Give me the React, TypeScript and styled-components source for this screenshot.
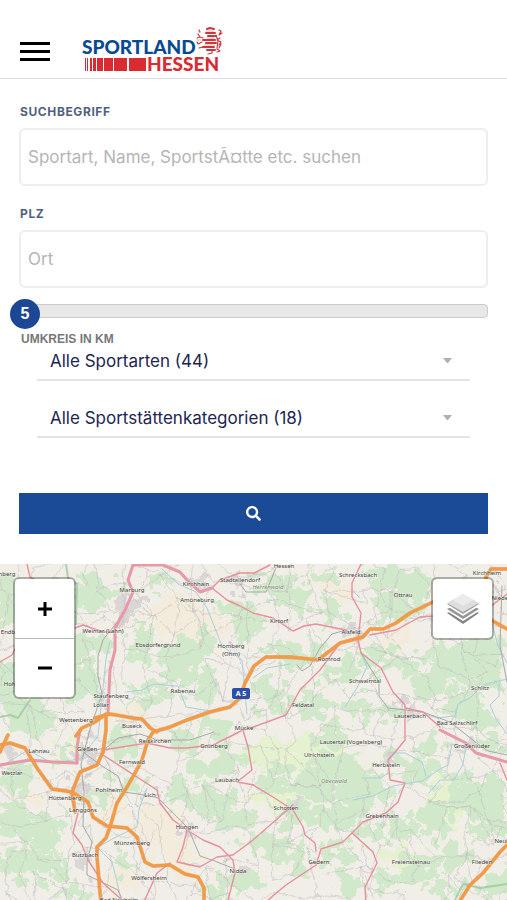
import React, { useState } from "react";
import styled, { createGlobalStyle } from "styled-components";
import { FaSearch } from "react-icons/fa";

const GlobalStyle = createGlobalStyle`
  *, *::before, *::after { box-sizing: border-box; }
  body { margin: 0; background: #fff; font-family: Inter, "Liberation Sans", sans-serif; }
`;

const Page = styled.div`
  display: flex;
  flex-direction: column;
  min-height: 100vh;
`;

const Header = styled.header`
  display: flex;
  align-items: flex-start;
  gap: 32px;
  height: 79px;
  padding: 27px 20px 0;
  border-bottom: 1px solid #ddd;
`;

const MenuButton = styled.button`
  display: flex;
  flex-direction: column;
  gap: 5px;
  width: 30px;
  margin-top: 15px;
  padding: 0;
  border: 0;
  background: none;
  cursor: pointer;
`;

const MenuBar = styled.span`
  height: 3px;
  background: #000;
`;

const LogoLink = styled.a`
  display: block;
  line-height: 0;
`;

const SearchForm = styled.form`
  display: flex;
  flex-direction: column;
  padding: 25px 19px 30px;
`;

const Field = styled.div`
  display: flex;
  flex-direction: column;
  gap: 8px;
  & + & { margin-top: 20px; }
`;

const FieldLabel = styled.label`
  padding-left: 1px;
  font-size: 12px;
  font-weight: 700;
  line-height: 16px;
  letter-spacing: 0.05em;
  color: #525f7f;
`;

const TextInput = styled.input`
  width: 100%;
  height: 58px;
  padding: 0 7px;
  border: 2px solid #eee;
  border-radius: 6px;
  font: 400 17px/24px Inter, sans-serif;
  color: #172b4d;
  &::placeholder { color: #b5b5b5; opacity: 1; }
`;

const RangeWrap = styled.div`
  position: relative;
  display: flex;
  margin-top: 16px;
`;

const RangeInput = styled.input`
  appearance: none;
  width: 100%;
  height: 14px;
  margin: 0;
  border: 1px solid #ccc;
  border-radius: 4px;
  background: #e8e8e8;
  cursor: pointer;
  &::-webkit-slider-thumb { appearance: none; width: 12px; height: 12px; background: transparent; }
`;

const RangeBadge = styled.output`
  position: absolute;
  top: -5px;
  margin-left: -9px;
  width: 30px;
  height: 30px;
  border-radius: 50%;
  background: #1b4794;
  color: #fff;
  font: 700 16px/30px "Liberation Sans", sans-serif;
  text-align: center;
  pointer-events: none;
`;

const RangeLabel = styled.label`
  margin: 13px 2px 0;
  font: 700 12px/16px "Liberation Sans", sans-serif;
  color: #777;
`;

const SelectList = styled.div`
  display: flex;
  flex-direction: column;
  gap: 23px;
  padding: 0 18px;
`;

const SelectRow = styled.div`
  display: grid;
  align-items: center;
  height: 34px;
  padding-bottom: 4px;
  border-bottom: 2px solid #e4e4e4;
  & > * { grid-area: 1 / 1; }
`;

const Select = styled.select`
  appearance: none;
  width: 100%;
  height: 28px;
  padding: 0 40px 0 13px;
  border: 0;
  background: transparent;
  font: 400 17px/24px Inter, sans-serif;
  color: #1d2550;
`;

const Caret = styled.svg`
  justify-self: end;
  margin-right: 17px;
  pointer-events: none;
`;

const SubmitButton = styled.button`
  display: flex;
  align-items: center;
  justify-content: center;
  height: 41px;
  margin-top: 55px;
  border: 1px solid #174a9c;
  background: #1b4a96;
  color: #fff;
  font-size: 15px;
  cursor: pointer;
`;

const MapFrame = styled.section`
  position: relative;
  flex: 1;
  min-height: 336px;
  overflow: hidden;
  background: #f1efe5;
`;

const MapDrawing = styled.svg`
  position: absolute;
  inset: 0;
  width: 100%;
  height: 100%;
`;

const MapControls = styled.div`
  position: relative;
  display: flex;
  justify-content: space-between;
  align-items: flex-start;
  padding: 13px 13px 0;
`;

const ControlBox = styled.div`
  display: flex;
  flex-direction: column;
  width: 63px;
  border: 2px solid rgba(0, 0, 0, 0.28);
  border-radius: 6px;
  background: #fff;
  background-clip: padding-box;
`;

const ControlButton = styled.button`
  display: flex;
  align-items: center;
  justify-content: center;
  height: 59px;
  padding: 0;
  border: 0;
  background: none;
  cursor: pointer;
  & + & { border-top: 1px solid #bbb; }
`;

const forests = [
  [12, 40, 20, 26], [8, 120, 18, 30], [92, 28, 26, 18], [88, 82, 20, 14], [30, 152, 24, 18], [80, 118, 22, 22], [158, 16, 12, 13],
  [140, 78, 12, 20], [180, 96, 20, 24], [200, 80, 16, 12], [140, 136, 14, 9], [160, 122, 18, 7], [206, 124, 16, 14], [232, 44, 16, 8], [247, 60, 13, 17],
  [272, 22, 22, 15], [298, 34, 14, 16], [330, 48, 14, 11], [322, 12, 18, 9], [392, 42, 20, 16], [388, 12, 22, 9], [416, 22, 16, 20], [450, 92, 22, 16],
  [276, 86, 15, 10], [300, 90, 24, 12], [372, 94, 14, 14], [402, 96, 18, 12], [430, 118, 22, 17], [470, 102, 22, 20], [494, 96, 12, 30], [340, 108, 18, 10],
  [272, 132, 16, 18], [312, 142, 22, 12], [352, 142, 16, 12], [330, 172, 20, 10], [384, 148, 16, 12], [464, 138, 20, 14], [480, 155, 22, 8],
  [186, 176, 14, 12], [214, 164, 18, 12], [232, 194, 18, 10], [204, 204, 18, 12], [180, 228, 17, 14], [214, 240, 20, 15], [238, 258, 16, 12],
  [120, 178, 12, 16], [126, 220, 14, 8], [98, 234, 12, 10], [58, 196, 10, 8], [20, 216, 20, 16], [12, 256, 17, 18], [42, 268, 20, 22], [20, 298, 22, 14],
  [52, 304, 15, 16], [72, 330, 15, 8], [122, 300, 8, 12], [242, 316, 20, 10], [212, 328, 14, 8],
  [336, 212, 36, 22], [368, 228, 24, 16], [306, 222, 22, 13], [276, 222, 22, 9], [272, 206, 16, 8], [300, 250, 20, 12], [330, 256, 24, 9], [352, 246, 16, 10],
  [270, 282, 17, 15], [298, 292, 14, 16], [336, 292, 18, 10], [368, 268, 14, 12], [346, 318, 12, 14], [398, 196, 16, 8], [422, 206, 22, 11], [428, 184, 16, 9],
  [470, 232, 23, 24], [496, 240, 16, 25], [434, 256, 16, 20], [402, 264, 14, 14], [420, 306, 22, 14], [456, 292, 16, 12], [490, 268, 18, 10], [388, 318, 14, 10], [446, 326, 16, 8], [498, 320, 14, 14], [490, 182, 12, 10], [454, 212, 12, 7]
];

const meadows = [[270, 190, 30, 14], [308, 196, 18, 20], [336, 180, 18, 14], [274, 236, 24, 8], [398, 290, 14, 12], [350, 200, 24, 8], [446, 240, 14, 30], [70, 180, 10, 8]];
const fields = [[178, 52, 30, 20], [160, 260, 24, 22], [178, 290, 18, 22], [114, 246, 12, 12], [126, 42, 12, 20], [210, 60, 20, 12], [130, 150, 24, 8], [340, 26, 12, 10], [396, 78, 14, 8], [28, 228, 12, 10], [118, 320, 16, 12]];
const towns = [[128, 44, 10, 15], [84, 184, 9, 10], [80, 222, 8, 12], [8, 192, 10, 8], [200, 20, 7, 7], [234, 20, 8, 6], [350, 68, 10, 8], [410, 147, 9, 6], [108, 68, 5, 5], [104, 138, 6, 8], [88, 296, 7, 9], [186, 264, 6, 6], [293, 240, 7, 5], [468, 180, 8, 6], [235, 306, 6, 6], [494, 32, 6, 8], [150, 228, 6, 5], [390, 200, 5, 5]];

const motorways = [
  "M101 340L97 293V283L106 274L110 263L117 239L127 223L135 209L142 196L148 176L153 168L170 163L187 156L210 148L230 143L240 134L245 119L254 102L266 93L290 93L318 96L340 79L363 73L370 65H383L396 59L410 49L433 38L460 28L486 20",
  "M0 181L10 179L25 184L37 204L52 225L72 228L88 238L93 253L107 262L127 264L137 273L145 298L153 302L170 301L185 310L198 313L204 324V340",
  "M75 248L72 228L80 208L97 201L103 188L106 166V150L95 158L82 164L76 172",
  "M95 154L110 150L133 154L142 155L150 164L157 168",
  "M0 188L8 171",
  "M507 281L500 288L483 309L470 321L458 340",
  "M507 5H491L486 13L488 50L491 56L507 65"
];

const primaryRoads = [
  "M143 0L133 1L128 16L133 28L125 46L115 64V86L110 106L108 149",
  "M133 1H163L180 8L187 16L200 28L212 24",
  "M77 199V183L80 166", "M0 201L30 196L53 198L77 199",
  "M440 166L466 179L476 189L507 198"
];

const secondaryRoads = [
  "M212 24L220 16L240 9H254L270 1",
  "M212 24L227 36L240 42L253 49L273 54L293 67L304 62L316 60L346 66",
  "M361 0L352 19V33L361 49L358 76L361 89L381 104L393 128L405 141L405 166L405 176L396 187L388 196L390 216L405 219L398 238L386 249L363 258L352 269L343 278L321 285L316 301L286 321L268 336",
  "M352 269L373 288L377 299L365 323L366 340",
  "M103 191L137 213L157 226L160 239L173 256L187 266L203 276L220 283L233 296L235 309L227 340",
  "M253 221L273 233L293 246L303 263L305 271L315 279L316 287M293 241L276 256L253 276L233 291L217 293L200 303L177 298L183 283L187 266",
  "M103 186L147 179L170 184L187 184L213 181L243 166L253 163L286 151L300 126L320 106L340 79",
  "M243 166L248 183L252 206L237 218L254 221",
  "M406 144L423 148L440 163M500 199L507 216",
  "M370 71L396 66L420 53L433 52L470 48",
  "M78 249L73 269L82 281L88 296L103 319L122 336",
  "M143 340L157 309L170 299", "M0 98L12 91L22 72", "M27 0L30 13L42 20", "M75 64L83 61L103 68L116 68", "M507 30L491 42"
];

const railways = [
  "M133 26L125 48L103 76L98 92V112L102 130L90 165L81 200L84 228L83 262L92 278L87 298V311L118 326L124 340",
  "M346 66L332 70L320 84L310 102L302 107L297 101", "M361 89L379 118V132L388 144L423 148L450 158L478 180L488 187L507 191",
  "M240 20L246 28H266L276 4", "M83 188L102 202L118 212L124 228L138 230L158 234L168 244L188 264L200 292L212 296L235 305", "M502 22L500 82L507 118",
  "M84 188L106 184L118 174L140 170L158 176L190 176L214 168"
];

const rivers = [
  "M162 5L178 20L196 28L207 44L222 82L242 96L247 150", "M0 203L28 186L52 199L80 195L98 172L106 95L110 78",
  "M126 128L142 126L153 120L178 122L186 143L210 147", "M253 114L267 104L290 100", "M361 89L367 103L358 122L345 143",
  "M507 99L498 82L490 52V26", "M498 117L483 121L470 134L458 140L455 152L450 158M423 150L438 154L453 152", "M507 115L499 117V132L490 141L496 155L507 170",
  "M353 236L373 232L393 222L422 217L440 205L448 201L452 180L466 183L463 200L454 216L440 216L428 230M390 189L405 189L422 198L426 212", "M362 214L380 214L390 208",
  "M100 282L114 274L137 263L139 245L147 224", "M98 284L112 298L117 318L122 340", "M276 254L293 240M352 26L360 34M0 97L16 112"
];

const places: [string, number, number, boolean?][] = [
  ["nberg", 7, 12], ["Hessen", 284, 4], ["Marburg", 132, 28], ["Kirchhain", 196, 22], ["Stadtallendorf", 240, 18], ["Amöneburg", 197, 38],
  ["Weimar (Lahn)", 103, 69], ["Endbach", 13, 70], ["Ebsdorfergrund", 158, 83], ["Homberg", 231, 84], ["(Ohm)", 231, 92], ["Staufenberg", 111, 134], ["Lollar", 101, 143],
  ["Rabenau", 183, 129], ["Wettenberg", 76, 158], ["Buseck", 132, 164], ["Mücke", 244, 166], ["Schrecksbach", 358, 13], ["Herrenwald", 268, 25, true], ["Ottrau", 403, 33],
  ["Kirtorf", 279, 59], ["Alsfeld", 351, 70], ["Romrod", 329, 97], ["Schwalmtal", 365, 119], ["Feldatal", 303, 143], ["Lauterbach", 410, 154], ["Bad Salzschlirf", 457, 161], ["Schlitz", 480, 126],
  ["Kirchheim", 487, 11], ["Niederaula", 507, 36], ["Lahnau", 39, 189], ["Gießen", 87, 187], ["Reiskirchen", 155, 179], ["Grünberg", 214, 184], ["Fernwald", 132, 200], ["Wetzlar", 12, 211],
  ["Pohlheim", 109, 228], ["Lich", 150, 233], ["Laubach", 227, 218], ["Hüttenberg", 65, 236], ["Langgöns", 83, 248], ["Hungen", 187, 265], ["Münzenberg", 132, 281], ["Butzbach", 85, 293],
  ["Nidda", 238, 309], ["Wölfersheim", 149, 316], ["Bad Nauheim", 119, 338], ["Lautertal (Vogelsberg)", 351, 180], ["Ulrichstein", 319, 193], ["Herbstein", 386, 203], ["Großenlüder", 472, 184],
  ["Oberwald", 334, 219, true], ["Schotten", 286, 246], ["Grebenhain", 382, 254], ["Gedern", 319, 300], ["Freiensteinau", 411, 300], ["Flieden", 482, 300], ["Neuhof", 505, 279], ["Hohenahr", 18, 122]
];

/* Local roads: a jittered mesh with some of its edges left out, the same on every render. */
function localRoads(columns: number, rows: number, step: number) {
  const noise = (a: number, b: number, c: number) => {
    const v = Math.sin(a * 127.1 + b * 311.7 + c * 74.7) * 43758.5453;
    return v - Math.floor(v);
  };
  const node = (i: number, j: number) => [
    Math.round(i * step + (noise(i, j, 1) - 0.5) * step * 1.1),
    Math.round(j * step + (noise(i, j, 2) - 0.5) * step * 1.1)
  ];
  let d = "";
  for (let i = 0; i < columns; i++) {
    for (let j = 0; j < rows; j++) {
      const [x, y] = node(i, j);
      [[1, 0], [0, 1], [1, 1]].forEach(([di, dj], k) => {
        if (noise(i, j, k + 3) > (k === 2 ? 0.8 : 0.3)) {
          const [u, v] = node(i + di, j + dj);
          const mx = Math.round((x + u) / 2 + (noise(i, j, k + 7) - 0.5) * 10);
          const my = Math.round((y + v) / 2 + (noise(i, j, k + 9) - 0.5) * 10);
          d += `M${x} ${y}Q${mx} ${my} ${u} ${v}`;
        }
      });
    }
  }
  return d;
}
const lanes = localRoads(26, 18, 21);

function Patches({ items, fill }: { items: number[][]; fill: string }) {
  return (
    <g fill={fill}>
      {items.map(([cx, cy, rx, ry], i) => <ellipse key={i} cx={cx} cy={cy} rx={rx} ry={ry} />)}
    </g>
  );
}

function Lines({ items, color, width, opacity = 1 }: { items: string[]; color: string; width: number; opacity?: number }) {
  return (
    <g fill="none" stroke={color} strokeWidth={width} strokeLinejoin="round" strokeLinecap="round" opacity={opacity}>
      {items.map((d) => <path key={d} d={d} />)}
    </g>
  );
}

function RegionMap() {
  return (
    <MapDrawing viewBox="0 0 507 336" preserveAspectRatio="xMidYMin slice" role="img" aria-label="Karte von Mittelhessen">
      <defs>
        <filter id="rough" x="-5%" y="-5%" width="110%" height="110%" colorInterpolationFilters="sRGB">
          <feTurbulence type="fractalNoise" baseFrequency="0.07" numOctaves="4" seed="8" />
          <feDisplacementMap in="SourceGraphic" scale="44" xChannelSelector="R" yChannelSelector="G" />
        </filter>
        <filter id="wobble" x="-5%" y="-5%" width="110%" height="110%" colorInterpolationFilters="sRGB">
          <feTurbulence type="fractalNoise" baseFrequency="0.12" numOctaves="2" seed="3" />
          <feDisplacementMap in="SourceGraphic" scale="6" xChannelSelector="R" yChannelSelector="G" />
        </filter>
      </defs>
      <rect width="507" height="336" fill="#f0eee7" />
      <g filter="url(#rough)">
        <Patches items={fields} fill="#f3ecdc" />
        <Patches items={meadows} fill="#e6f1d0" />
        <Patches items={forests} fill="#d1e8ca" />
        <Patches items={towns} fill="#dad6d6" />
      </g>
      <g filter="url(#wobble)">
        <Lines items={[lanes]} color="#bdb9bf" width={1} opacity={0.5} />
      </g>
      <Lines items={rivers} color="#abd0dc" width={1} />
      <Lines items={railways} color="#a6aaa8" width={1} />
      <Lines items={["M66 0L68 14L77 20L76 60", "M0 153L10 151L18 154L30 136", "M455 336L463 320L480 324L507 320"]} color="#94c49a" width={2} opacity={0.7} />
      <Lines items={secondaryRoads} color="#e8909c" width={1.4} />
      <Lines items={primaryRoads} color="#e799a8" width={3} />
      <Lines items={motorways} color="#e08c3c" width={4} opacity={0.5} />
      <Lines items={motorways} color="#f29a48" width={3} />
      <g fontFamily="'Noto Sans', 'Open Sans', sans-serif" fontSize="6" textAnchor="middle" stroke="#f7f6ee" strokeOpacity="0.6" strokeWidth="1" paintOrder="stroke">
        {places.map(([name, x, y, woodland]) => (
          <text key={name} x={x} y={y} fill={woodland ? "#788a72" : "#3c3c3c"} fontStyle={woodland ? "italic" : "normal"}>{name}</text>
        ))}
      </g>
      <rect x="232" y="124" width="18" height="11" rx="2" fill="#2b50a8" />
      <text x="241" y="132" fontFamily="'Noto Sans', sans-serif" fontSize="7" fontWeight="700" textAnchor="middle" fill="#fff">A 5</text>
    </MapDrawing>
  );
}

function Logo() {
  return (
    <svg width="142" height="48" viewBox="0 0 142 48" role="img" aria-label="Sportland Hessen">
      <text x="0" y="27" fontFamily="Lato, sans-serif" fontWeight="900" fontSize="19" fill="#064a93">SPORTLAND</text>
      <text x="65" y="44" fontFamily="Lato, sans-serif" fontWeight="900" fontSize="19" fill="#d92b31">HESSEN</text>
      <g fill="#d92b31">
        <path d="M3 31h1v13H3zM5 31h1v13H5zM8 31h2v13H8zM11 31h3v13h-3zM15 31h6v13h-6zM22 31h9v13h-9zM32 31h13v13H32zM47 31h17v13H47z" />
      </g>
      <g fill="none" stroke="#cf353b" strokeLinecap="round" strokeLinejoin="round">
        <path strokeWidth="2" d="M125 2l3-1 4 1M124 6h9M126 9h8M121 13h12M124 16h10M121 20h11M125 23h8" />
        <path strokeWidth="1.2" d="M121 11l-3-1-2-3M118 10l-3 1M117 3l1 2M120 15l-4 2-1-2M121 20l-4 1M130 24v2l-4 1M137 3l2 1-2 4 3-2M138 11l-3 2 4 2-2 3M139 17l-2 4M135 22l3 2-3 1M134 8l2 6-1 7" />
      </g>
      <path d="M124 4h8M125 11h7M122 18h11M116 5h2M115 13h4" stroke="#a98a83" strokeWidth="0.6" />
    </svg>
  );
}

function LayersIcon() {
  return (
    <svg width="34" height="32" viewBox="0 0 34 32" aria-hidden="true">
      <path d="M17 13l16 7-16 11L1 20z" fill="#858585" />
      <path d="M17 11l16 7-16 10L1 18z" fill="#fff" />
      <path d="M17 8l16 8-16 10L1 16z" fill="#959595" />
      <path d="M17 5l16 8-16 10L1 13z" fill="#fff" />
      <path d="M17 3l16 8-16 10L1 11z" fill="#a2a2a2" />
      <path d="M17 1l16 9-16 9L1 10z" fill="#dedede" />
      <path d="M17 1l10 6-10 6-10-6z" fill="#ebebeb" />
    </svg>
  );
}

function FilterSelect({ label, text }: { label: string; text: string }) {
  return (
    <SelectRow>
      <Select aria-label={label}><option>{text}</option></Select>
      <Caret width="11" height="6" viewBox="0 0 11 6" aria-hidden="true"><path d="M1 0h9L6 5H5z" fill="#b0b0b0" /></Caret>
    </SelectRow>
  );
}

export default function App() {
  const [radius, setRadius] = useState(5);
  return (
    <Page>
      <GlobalStyle />
      <Header>
        <MenuButton type="button" aria-label="Menü"><MenuBar /><MenuBar /><MenuBar /></MenuButton>
        <LogoLink href="#"><Logo /></LogoLink>
      </Header>
      <SearchForm onSubmit={(e) => e.preventDefault()}>
        <Field>
          <FieldLabel htmlFor="term">SUCHBEGRIFF</FieldLabel>
          <TextInput id="term" type="text" placeholder="Sportart, Name, SportstÃ¤tte etc. suchen" />
        </Field>
        <Field>
          <FieldLabel htmlFor="place">PLZ</FieldLabel>
          <TextInput id="place" type="text" placeholder="Ort" />
        </Field>
        <RangeWrap>
          <RangeInput id="radius" type="range" min={5} max={100} value={radius} onChange={(e) => setRadius(Number(e.target.value))} />
          <RangeBadge htmlFor="radius" style={{ left: `${((radius - 5) / 95) * 96}%` }}>{radius}</RangeBadge>
        </RangeWrap>
        <RangeLabel htmlFor="radius">UMKREIS IN KM</RangeLabel>
        <SelectList>
          <FilterSelect label="Sportarten" text="Alle Sportarten (44)" />
          <FilterSelect label="Sportstättenkategorien" text="Alle Sportstättenkategorien (18)" />
        </SelectList>
        <SubmitButton type="submit" aria-label="Suchen"><FaSearch /></SubmitButton>
      </SearchForm>
      <MapFrame>
        <RegionMap />
        <MapControls>
          <ControlBox>
            <ControlButton type="button" aria-label="Vergrößern">
              <svg width="16" height="16" viewBox="0 0 16 16"><path d="M8 1v14M1 8h14" stroke="#000" strokeWidth="3" /></svg>
            </ControlButton>
            <ControlButton type="button" aria-label="Verkleinern">
              <svg width="16" height="16" viewBox="0 0 16 16"><path d="M1 8h14" stroke="#000" strokeWidth="3" /></svg>
            </ControlButton>
          </ControlBox>
          <ControlBox>
            <ControlButton type="button" aria-label="Kartenebenen"><LayersIcon /></ControlButton>
          </ControlBox>
        </MapControls>
      </MapFrame>
    </Page>
  );
}
